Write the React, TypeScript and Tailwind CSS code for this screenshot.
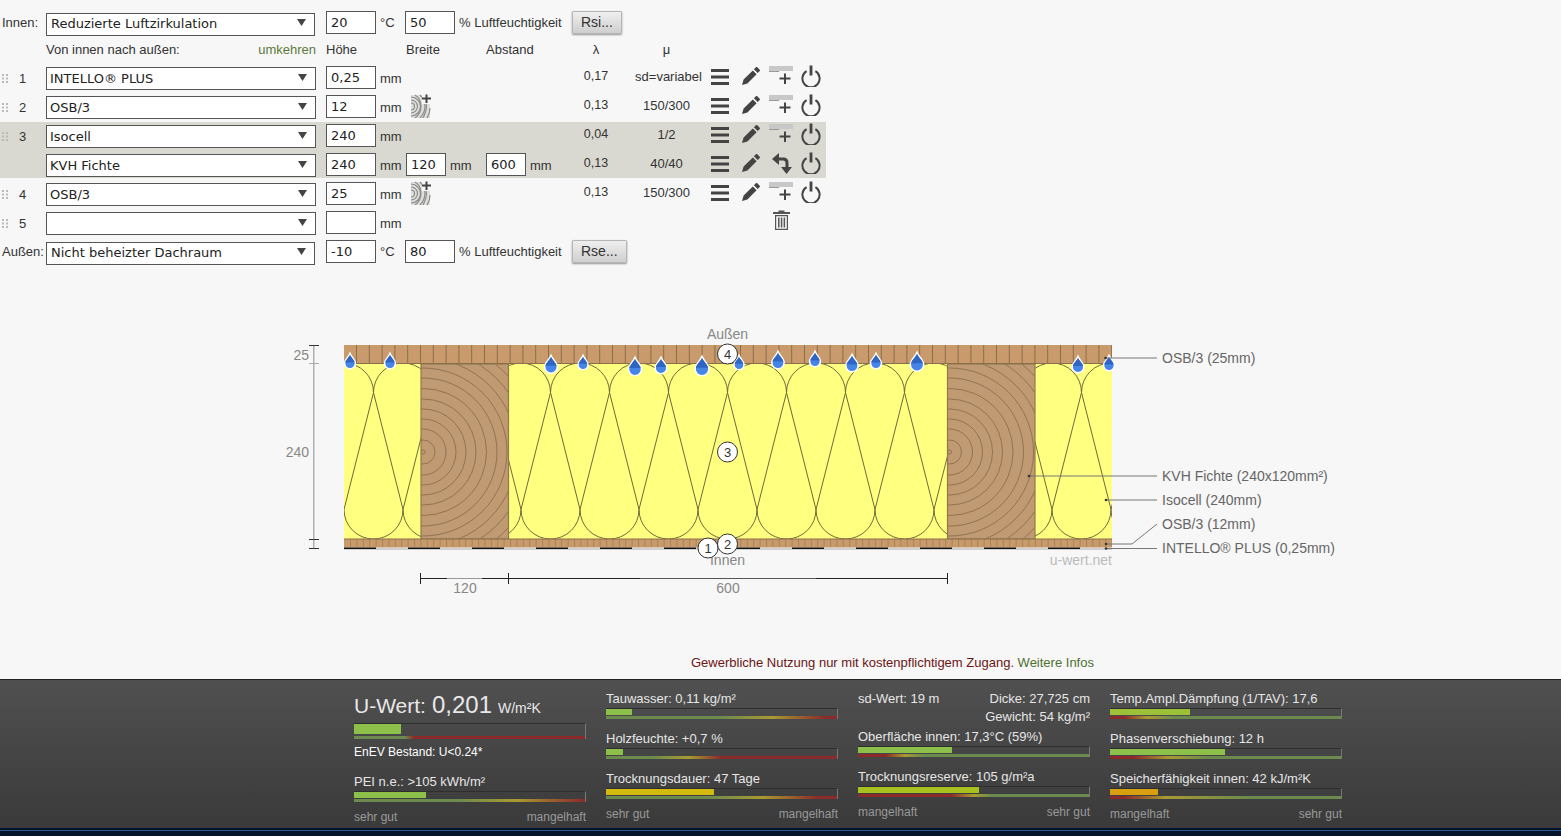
import React from 'react';

const selectCls = "h-[23px] appearance-none rounded-none border border-[#555] bg-white pr-6 font-['DejaVu_Sans',sans-serif] text-[13px] text-[#222] outline-none";
const inputCls = "h-[23px] rounded-none border border-[#555] bg-white px-[4px] font-['DejaVu_Sans',sans-serif] text-[13px] text-[#222] outline-none";

const Select: React.FC<{ value: string; wide?: boolean }> = ({ value, wide }) => (
    <div className={`relative ${wide ? 'w-[270px]' : 'w-[269px]'} shrink-0`}>
        <select defaultValue={value} className={`${selectCls} ${wide ? 'pl-[3px]' : 'pl-[4px] pb-[2px]'} w-full`}>
            <option value={value}>{value}</option>
        </select>
        <svg className="pointer-events-none absolute right-[9px] top-[8px]" width="9" height="7" viewBox="0 0 9 7">
            <path d="M0 0h9L4.500 7z" fill="#444" />
        </svg>
    </div>
);

const Handle = () => (
    <svg width="6" height="9" viewBox="0 0 6 9" className="absolute left-[2px] top-[8px]">
        {[0, 3.5, 7].map(y => (
            <g key={y} fill="#bbb">
                <rect x="0" y={y} width="2" height="2" />
                <rect x="4" y={y} width="2" height="2" />
            </g>
        ))}
    </svg>
);

const ListIcon = () => (
    <svg width="18" height="16" viewBox="0 0 18 16">
        <rect y="0" width="18" height="3" fill="#444" />
        <rect y="6.5" width="18" height="3" fill="#444" />
        <rect y="13" width="18" height="3" fill="#444" />
    </svg>
);

const PencilIcon = () => (
    <svg width="18" height="18" viewBox="0 0 18 18">
        <path d="M0 18l1.600-5.400L10.800 3.400l3.800 3.800-9.200 9.200zM11.900 2.300L13.900.3c.4-.4 1-.4 1.400 0l2.400 2.400c.4.4.4 1 0 1.400l-2 2z" fill="#444" />
    </svg>
);

const AddLayerIcon = () => (
    <svg width="24" height="21" viewBox="0 0 24 21">
        <rect x="0" y="0" width="24" height="5" fill="#c8c8c8" />
        <rect x="0" y="5" width="10" height="1" fill="#999" />
        <path d="M15 7.500h2v4h4.500v2H17v4.500h-2v-4.500h-4.500v-2H15z" fill="#444" />
    </svg>
);

const PowerIcon = () => (
    <svg width="20" height="22" viewBox="0 0 20 22">
        <path d="M5.600 6.200a8.600 8.600 0 1 0 8.800 0" fill="none" stroke="#444" strokeWidth="2" />
        <rect x="8.600" y="0.500" width="2.800" height="10" fill="#444" />
    </svg>
);

const UndoIcon = () => (
    <svg width="20" height="22" viewBox="0 0 20 22">
        <path d="M5 6h6.500c2.500 0 3.500 1.500 3.500 4v5" fill="none" stroke="#444" strokeWidth="3" />
        <path d="M0 6L7 0v12z" fill="#444" />
        <path d="M9 14h11l-5.500 7z" fill="#444" />
    </svg>
);

const TrashIcon = () => (
    <svg width="17" height="20" viewBox="0 0 17 20">
        <path d="M5.500 2V.6h6V2H17v2H0V2z" fill="#555" />
        <path d="M2 5h13v15H2zM3.200 6.200v12.600h10.600V6.200z" fill="#555" fillRule="evenodd" />
        <rect x="5" y="7.500" width="1.500" height="10" fill="#555" />
        <rect x="7.800" y="7.500" width="1.500" height="10" fill="#555" />
        <rect x="10.600" y="7.500" width="1.500" height="10" fill="#555" />
    </svg>
);

const WoodIcon = () => (
    <svg width="20" height="24" viewBox="0 0 20 24">
        <rect x="0" y="1" width="19" height="23" fill="#dededa" />
        <g fill="none" stroke="#8c8c8c" strokeWidth="1.200">
            <path d="M0 9a3.500 3.500 0 0 1 0 7" />
            <path d="M0 6a6.500 6.500 0 0 1 0 13" />
            <path d="M0 3a9.500 9.500 0 0 1 0 19" />
            <path d="M4 1a13 13 0 0 1 6 11c0 5-2 9-6 12" />
            <path d="M9 1a17 17 0 0 1 5 11c0 5-2 9-5 12" />
            <path d="M14 7c2 3 2 9-2 17" />
            <path d="M19 14c0 4-1 7-3 10" />
        </g>
        <rect x="11" y="0" width="9" height="10" fill="#f7f7f7" />
        <path d="M14.500 0.500h2v3H20v2h-3.500v3.500h-2V5.500H11v-2h3.500z" fill="#444" />
    </svg>
);

interface LayerRow {
    num?: string;
    name: string;
    h: string;
    lambda?: string;
    mu?: string;
    wood?: boolean;
    breite?: string;
    abstand?: string;
    sub?: boolean;
    empty?: boolean;
}

const Row: React.FC<{ r: LayerRow }> = ({ r }) => (
    <div className={`relative flex ${r.sub ? 'h-[27px]' : 'h-[29px]'} items-start pt-[2px]`}>
        <div className="relative h-[23px] w-[46px] shrink-0">
            {r.num && <Handle />}
            {r.num && <span className="absolute left-[19px] top-[3px] text-[13px] text-[#333]">{r.num}</span>}
        </div>
        <Select value={r.name} wide />
        <input defaultValue={r.h} className={`${inputCls} ml-[10px] w-[50px] shrink-0`} />
        <span className="w-[30px] shrink-0 pl-[4px] pt-[3px] text-[13px] text-[#333]">mm</span>
        <div className="flex w-[164px] shrink-0 items-start">
            {r.wood && <div className="ml-[5px] -mt-[1px]"><WoodIcon /></div>}
            {r.breite && (
                <>
                    <input defaultValue={r.breite} className={`${inputCls} w-[40px]`} />
                    <span className="w-[40px] pl-[4px] pt-[3px] text-[13px] text-[#333]">mm</span>
                    <input defaultValue={r.abstand} className={`${inputCls} w-[40px]`} />
                    <span className="pl-[4px] pt-[3px] text-[13px] text-[#333]">mm</span>
                </>
            )}
        </div>
        <div className="w-[52px] shrink-0 pt-px text-center text-[12.500px] text-[#333]">{r.lambda}</div>
        <div className={`w-[89px] shrink-0 pt-px text-center text-[13px] text-[#333] whitespace-nowrap ${r.mu === 'sd=variabel' ? 'pl-[4px]' : ''}`}>{r.mu}</div>
        {r.empty ? (
            <div className="ml-[62px] -mt-[1px]"><TrashIcon /></div>
        ) : (
            <div className="flex items-start">
                <div className="mt-[3px]"><ListIcon /></div>
                <div className="ml-[13px] mt-[1px]"><PencilIcon /></div>
                <div className="ml-[9px] w-[24px]">{r.sub ? <div className="ml-[3px]"><UndoIcon /></div> : <AddLayerIcon />}</div>
                <div className="ml-[8px] -mt-[1px]"><PowerIcon /></div>
            </div>
        )}
    </div>
);

const EndRow: React.FC<{ label: string; name: string; temp: string; rh: string; btn: string }> = ({ label, name, temp, rh, btn }) => (
    <div className="flex h-[23px] items-start">
        <span className="w-[46px] shrink-0 pl-[2px] pt-[2px] text-[13px] text-[#333] whitespace-nowrap">{label}</span>
        <Select value={name} />
        <input defaultValue={temp} className={`${inputCls} ml-[11px] w-[50px] shrink-0`} />
        <span className="w-[29px] shrink-0 pl-[4px] pt-[2px] text-[13px] text-[#333]">°C</span>
        <input defaultValue={rh} className={`${inputCls} w-[50px] shrink-0`} />
        <span className="w-[117px] shrink-0 pl-[4px] pt-[2px] text-[13px] text-[#333] whitespace-nowrap">% Luftfeuchtigkeit</span>
        <button className="h-[23px] rounded-[1px] border border-[#b5b5b5] bg-gradient-to-b from-[#efefef] to-[#cfcfcf] px-[8px] text-[14px] text-[#333] shadow-[0_1px_2px_rgba(0,0,0,0.4)]">{btn}</button>
    </div>
);

const Drop: React.FC<{ x: number; tip: number; bottom: number }> = ({ x, tip, bottom }) => {
    const h = bottom - tip;
    const r = h * 0.36;
    const cy = bottom - r;
    const body = `M${x} ${tip}C${x + r * 0.3} ${tip + h * 0.22} ${x + r} ${cy - r * 0.6} ${x + r} ${cy}A${r} ${r} 0 1 1 ${x - r} ${cy}C${x - r} ${cy - r * 0.6} ${x - r * 0.3} ${tip + h * 0.22} ${x} ${tip}z`;
    return (
        <g>
            <path d={body} fill="#fff" stroke="#fff" strokeWidth="3" />
            <path d={body} fill="#4585e8" />
            <path d={`M${x} ${tip}C${x + r * 0.3} ${tip + h * 0.22} ${x + r} ${cy - r * 0.6} ${x + r} ${cy - r * 0.2}H${x - r}C${x - r} ${cy - r * 0.6} ${x - r * 0.3} ${tip + h * 0.22} ${x} ${tip}z`} fill="#2f66c4" />
        </g>
    );
};

const Badge: React.FC<{ x: number; y: number; n: string }> = ({ x, y, n }) => (
    <g>
        <circle cx={x} cy={y} r="10" fill="#fff" stroke="#333" strokeWidth="1" />
        <text x={x} y={y + 4.500} textAnchor="middle" fontSize="13" fill="#333">{n}</text>
    </g>
);

const drops = [
    [350, 355, 368], [390, 355, 368], [551, 357, 372.500], [583, 357, 369], [635, 359, 375], [661, 359, 373],
    [702, 358, 375], [739, 357, 369], [778, 353, 368], [815, 353, 366], [852, 356, 371], [876, 355, 368],
    [917, 354, 370.500], [1078, 358, 372], [1109, 357, 370],
];

const tops = Array.from({ length: 15 }, (_, i) => 344 + 59 * i);
const ringRadii = [12, 23, 33, 43, 53, 63.500, 74, 84, 94, 104, 114, 124, 134, 144];

const Beam: React.FC<{ x: number; id: string }> = ({ x, id }) => (
    <g>
        <clipPath id={id}><rect x={x} y="364" width="87.500" height="175" /></clipPath>
        <rect x={x} y="364" width="87.500" height="175" fill="#c09a72" />
        <g clipPath={`url(#${id})`} fill="none" stroke="#8a6f50" strokeWidth="0.900">
            {ringRadii.map(r => <circle key={r} cx={x + 2} cy="452" r={r} />)}
            <circle cx={x + 2} cy="452" r="2" />
        </g>
        <rect x={x} y="364" width="87.500" height="175" fill="none" stroke="#8f7a4d" strokeWidth="1.200" />
    </g>
);

const Diagram = () => (
    <svg width="1080" height="270" viewBox="270 325 1080 270" className="ml-[270px] block font-['Liberation_Sans',Arial,sans-serif]">
        <clipPath id="wall"><rect x="344" y="345" width="768" height="205" /></clipPath>
        <g clipPath="url(#wall)">
            <rect x="344" y="363" width="768" height="176" fill="#ffff80" />
            <g fill="none" stroke="#6e6b3c" strokeWidth="1">
                {tops.map(c => (
                    <g key={c}>
                        <path d={`M${c - 29.500} 392.500A29.500 29.500 0 0 1 ${c + 29.500} 392.500`} />
                        <path d={`M${c - 29.500} 392.500L${c} 509.500`} />
                        <path d={`M${c + 29.500} 392.500L${c} 509.500`} />
                        <path d={`M${c} 509.500A29.500 29.500 0 0 0 ${c + 59} 509.500`} />
                    </g>
                ))}
            </g>
            <Beam x={421} id="beam1" />
            <Beam x={947.500} id="beam2" />
            <rect x="344" y="345" width="768" height="18.500" fill="#c99a6b" />
            <g stroke="#8a6f4a" strokeWidth="1">
                {Array.from({ length: 60 }, (_, i) => <line key={i} x1={356.500 + 12.800 * i} x2={356.500 + 12.800 * i} y1="345" y2="363" />)}
                <line x1="344" x2="1112" y1="363.500" y2="363.500" />
            </g>
            <rect x="344" y="539" width="768" height="8.500" fill="#c99a6b" />
            <g stroke="#a58555" strokeWidth="1">
                {Array.from({ length: 120 }, (_, i) => <line key={i} x1={350.500 + 6.400 * i} x2={350.500 + 6.400 * i} y1="539" y2="547" />)}
                <line x1="344" x2="1112" y1="539" y2="539" stroke="#8a6f4a" />
            </g>
            <rect x="344" y="548.500" width="768" height="1" fill="#aaa" />
            {Array.from({ length: 12 }, (_, i) => <rect key={i} x={344 + 64 * i} y="547.500" width="32" height="1.500" fill="#111" />)}
        </g>
        {drops.map(([x, t, b]) => <Drop key={x} x={x} tip={t} bottom={b} />)}

        <text x="727.500" y="339" textAnchor="middle" fontSize="14" fill="#888">Außen</text>
        <text x="727.500" y="565" textAnchor="middle" fontSize="14" fill="#888">Innen</text>
        <text x="1112" y="565" textAnchor="end" fontSize="14" fill="#bbb">u-wert.net</text>
        <Badge x={727.500} y={354} n="4" />
        <Badge x={727.500} y={452} n="3" />
        <Badge x={708} y={548} n="1" />
        <Badge x={727.500} y={544} n="2" />

        <rect x="313" y="345" width="1.500" height="204" fill="#b0b0b0" />
        <g stroke="#333" strokeWidth="1">
            <line x1="309" x2="319" y1="345.500" y2="345.500" />
            <line x1="309" x2="319" y1="539.500" y2="539.500" />
            <line x1="309" x2="319" y1="548.500" y2="548.500" />
        </g>
        <line x1="309" x2="319" y1="363.500" y2="363.500" stroke="#aaa" />
        <text x="309" y="360" textAnchor="end" fontSize="14" fill="#888">25</text>
        <text x="309" y="457" textAnchor="end" fontSize="14" fill="#888">240</text>

        <g stroke="#222" strokeWidth="1">
            <line x1="420.500" x2="947.500" y1="578.500" y2="578.500" />
            <line x1="420.500" x2="420.500" y1="573" y2="584" />
            <line x1="508.500" x2="508.500" y1="573" y2="584" />
            <line x1="947.500" x2="947.500" y1="573" y2="584" />
        </g>
        <line x1="447" x2="482" y1="578.500" y2="578.500" stroke="#999" />
        <line x1="640" x2="816" y1="578.500" y2="578.500" stroke="#555" />
        <text x="465" y="593" textAnchor="middle" fontSize="14" fill="#888">120</text>
        <text x="728" y="593" textAnchor="middle" fontSize="14" fill="#888">600</text>

        <g stroke="#777" strokeWidth="1" fill="none">
            <path d="M1105.500 358H1157" />
            <path d="M1029 476H1157" />
            <path d="M1106 500H1157" />
            <path d="M1106 544H1132L1157 524" />
            <path d="M1106 548.500H1157" />
        </g>
        <g fill="#333">
            <circle cx="1105.500" cy="358" r="1.300" />
            <circle cx="1029" cy="476" r="1.300" />
            <circle cx="1106" cy="500" r="1.300" />
            <circle cx="1106" cy="544" r="1.300" />
            <circle cx="1106" cy="548.500" r="1.300" />
        </g>
        <g fontSize="14" fill="#666">
            <text x="1162" y="363">OSB/3 (25mm)</text>
            <text x="1162" y="481">KVH Fichte (240x120mm²)</text>
            <text x="1162" y="505">Isocell (240mm)</text>
            <text x="1162" y="529">OSB/3 (12mm)</text>
            <text x="1162" y="553">INTELLO® PLUS (0,25mm)</text>
        </g>
    </svg>
);

const Track: React.FC<{ fill: string; scale: string; big?: boolean }> = ({ fill, scale, big }) => (
    <div className="border-r border-t border-r-[#777] border-t-[#2e2e2e]">
        <div className={`${big ? 'h-[10px]' : 'h-[6px]'} ${fill}`} />
        <div className={`${big ? 'mt-[2px]' : 'mt-px'} h-[3px] ${scale}`} />
    </div>
);

const Metric: React.FC<{ label: string; fill: string; scale: string; className?: string }> = ({ label, fill, scale, className }) => (
    <div className={className}>
        <div className="h-[16px] text-[13px] leading-[16px] text-[#e6e6e6] whitespace-nowrap">{label}</div>
        <div className="mt-px"><Track fill={fill} scale={scale} /></div>
    </div>
);

const Legend: React.FC<{ left: string; right: string }> = ({ left, right }) => (
    <div className="mt-[7px] flex justify-between text-[12px] leading-[16px] text-[#999]">
        <span>{left}</span>
        <span>{right}</span>
    </div>
);

const greenBar = 'bg-[#8cc04b]';

export default function App() {
    return (
        <div className="flex h-[836px] w-[1561px] flex-col overflow-hidden bg-[#f7f7f7] font-['Liberation_Sans',Arial,sans-serif]">
            <div className="w-[826px] pt-[11px]">
                <EndRow label="Innen:" name="Reduzierte Luftzirkulation" temp="20" rh="50" btn="Rsi..." />
                <div className="flex h-[30px] items-start whitespace-nowrap pt-[6px] text-[13px] text-[#333]">
                    <span className="ml-[46px] w-[133px]">Von innen nach außen:</span>
                    <span className="w-[137px] text-right text-[#5a7a3a]">umkehren</span>
                    <span className="ml-[10px] w-[80px]">Höhe</span>
                    <span className="w-[80px]">Breite</span>
                    <span className="w-[84px]">Abstand</span>
                    <span className="w-[52px] text-center">λ</span>
                    <span className="w-[89px] text-center">μ</span>
                </div>
                <Row r={{ num: '1', name: 'INTELLO® PLUS', h: '0,25', lambda: '0,17', mu: 'sd=variabel' }} />
                <Row r={{ num: '2', name: 'OSB/3', h: '12', lambda: '0,13', mu: '150/300', wood: true }} />
                <div className="mb-[2px] bg-[#d9d9d1]">
                    <Row r={{ num: '3', name: 'Isocell', h: '240', lambda: '0,04', mu: '1/2' }} />
                    <Row r={{ name: 'KVH Fichte', h: '240', lambda: '0,13', mu: '40/40', breite: '120', abstand: '600', sub: true }} />
                </div>
                <Row r={{ num: '4', name: 'OSB/3', h: '25', lambda: '0,13', mu: '150/300', wood: true }} />
                <Row r={{ num: '5', name: '', h: '', empty: true }} />
                <div className="pt-[2px]">
                    <EndRow label="Außen:" name="Nicht beheizter Dachraum" temp="-10" rh="80" btn="Rse..." />
                </div>
            </div>

            <div className="mt-[62px]"><Diagram /></div>

            <div className="mt-[60px] h-[16px] pl-[691px] text-[13px] leading-[16px] text-[#6b1515]">
                Gewerbliche Nutzung nur mit kostenpflichtigem Zugang. <span className="text-[#4f7030]">Weitere Infos</span>
            </div>

            <div className="mt-[8px] flex h-[149px] shrink-0 gap-[20px] border-t border-t-[#222] bg-gradient-to-b from-[#505050] to-[#3a3a3a] pl-[354px] pt-[11px]">
                <div className="w-[232px]">
                    <div className="h-[32px]">
                        <div className="flex items-baseline whitespace-nowrap leading-[27px] text-[#e8e8e8]">
                            <span className="text-[21px]">U-Wert:</span>
                            <span className="ml-[6px] text-[24px]">0,201</span>
                            <span className="ml-[6px] text-[14px]">W/m²K</span>
                        </div>
                    </div>
                    <Track big fill={`w-[47px] ${greenBar}`} scale="bg-[linear-gradient(to_right,#6d8a4e_0%,#6d8a4e_22%,#8b2a2a_26%,#8b2a2a_100%)]" />
                    <div className="mt-[5px] h-[16px] text-[12px] leading-[16px] text-white">EnEV Bestand: U&lt;0.24*</div>
                    <Metric className="mt-[14px]" label="PEI n.e.: >105 kWh/m²" fill={`w-[72px] ${greenBar}`} scale="bg-[linear-gradient(to_right,#6d8a4e_0%,#6d8a4e_45%,#a89a30_70%,#8b2a2a_100%)]" />
                    <Legend left="sehr gut" right="mangelhaft" />
                </div>
                <div className="w-[232px]">
                    <Metric label="Tauwasser: 0,11 kg/m²" fill={`w-[26px] ${greenBar}`} scale="bg-[linear-gradient(to_right,#6d8a4e_0%,#6d8a4e_50%,#a89a30_72%,#8b2a2a_95%)]" />
                    <Metric className="mt-[12px]" label="Holzfeuchte: +0,7 %" fill={`w-[17px] ${greenBar}`} scale="bg-[linear-gradient(to_right,#6d8a4e_0%,#6d8a4e_20%,#a89a30_36%,#8b2a2a_50%,#8b2a2a_100%)]" />
                    <Metric className="mt-[12px]" label="Trocknungsdauer: 47 Tage" fill="w-[108px] bg-[#d4b90f]" scale="bg-[linear-gradient(to_right,#6d8a4e_0%,#6d8a4e_45%,#a89a30_68%,#8b2a2a_92%)]" />
                    <Legend left="sehr gut" right="mangelhaft" />
                </div>
                <div className="w-[232px]">
                    <div className="flex h-[16px] justify-between text-[13px] leading-[16px] text-[#e6e6e6]">
                        <span>sd-Wert: 19 m</span>
                        <span>Dicke: 27,725 cm</span>
                    </div>
                    <div className="mt-[2px] h-[16px] text-right text-[13px] leading-[16px] text-[#e6e6e6]">Gewicht: 54 kg/m²</div>
                    <Metric className="mt-[4px]" label="Oberfläche innen: 17,3°C (59%)" fill={`w-[94px] ${greenBar}`} scale="bg-[linear-gradient(to_right,#8b2a2a_0%,#8b2a2a_12%,#a89a30_20%,#6d8a4e_28%,#6d8a4e_100%)]" />
                    <Metric className="mt-[12px]" label="Trocknungsreserve: 105 g/m²a" fill="w-[121px] bg-[#a8c020]" scale="bg-[linear-gradient(to_right,#8b2a2a_0%,#8b2a2a_40%,#a89a30_50%,#6d8a4e_58%,#6d8a4e_100%)]" />
                    <Legend left="mangelhaft" right="sehr gut" />
                </div>
                <div className="w-[232px]">
                    <Metric label="Temp.Ampl.Dämpfung (1/TAV): 17,6" fill="w-[80px] bg-[#9cc038]" scale="bg-[linear-gradient(to_right,#8b2a2a_0%,#8b2a2a_6%,#a89a30_16%,#6d8a4e_28%,#6d8a4e_100%)]" />
                    <Metric className="mt-[12px]" label="Phasenverschiebung: 12 h" fill={`w-[115px] ${greenBar}`} scale="bg-[linear-gradient(to_right,#8b2a2a_0%,#8b2a2a_10%,#a89a30_26%,#6d8a4e_42%,#6d8a4e_100%)]" />
                    <Metric className="mt-[12px]" label="Speicherfähigkeit innen: 42 kJ/m²K" fill="w-[48px] bg-[#d8a010]" scale="bg-[linear-gradient(to_right,#8b2a2a_0%,#8b2a2a_6%,#a89a30_24%,#6d8a4e_60%,#6d8a4e_100%)]" />
                    <Legend left="mangelhaft" right="sehr gut" />
                </div>
            </div>

            <div className="h-[8px] shrink-0 bg-[#04142a] pt-[2px]">
                <div className="h-px bg-[#2a5a90]" />
            </div>
        </div>
    );
}
